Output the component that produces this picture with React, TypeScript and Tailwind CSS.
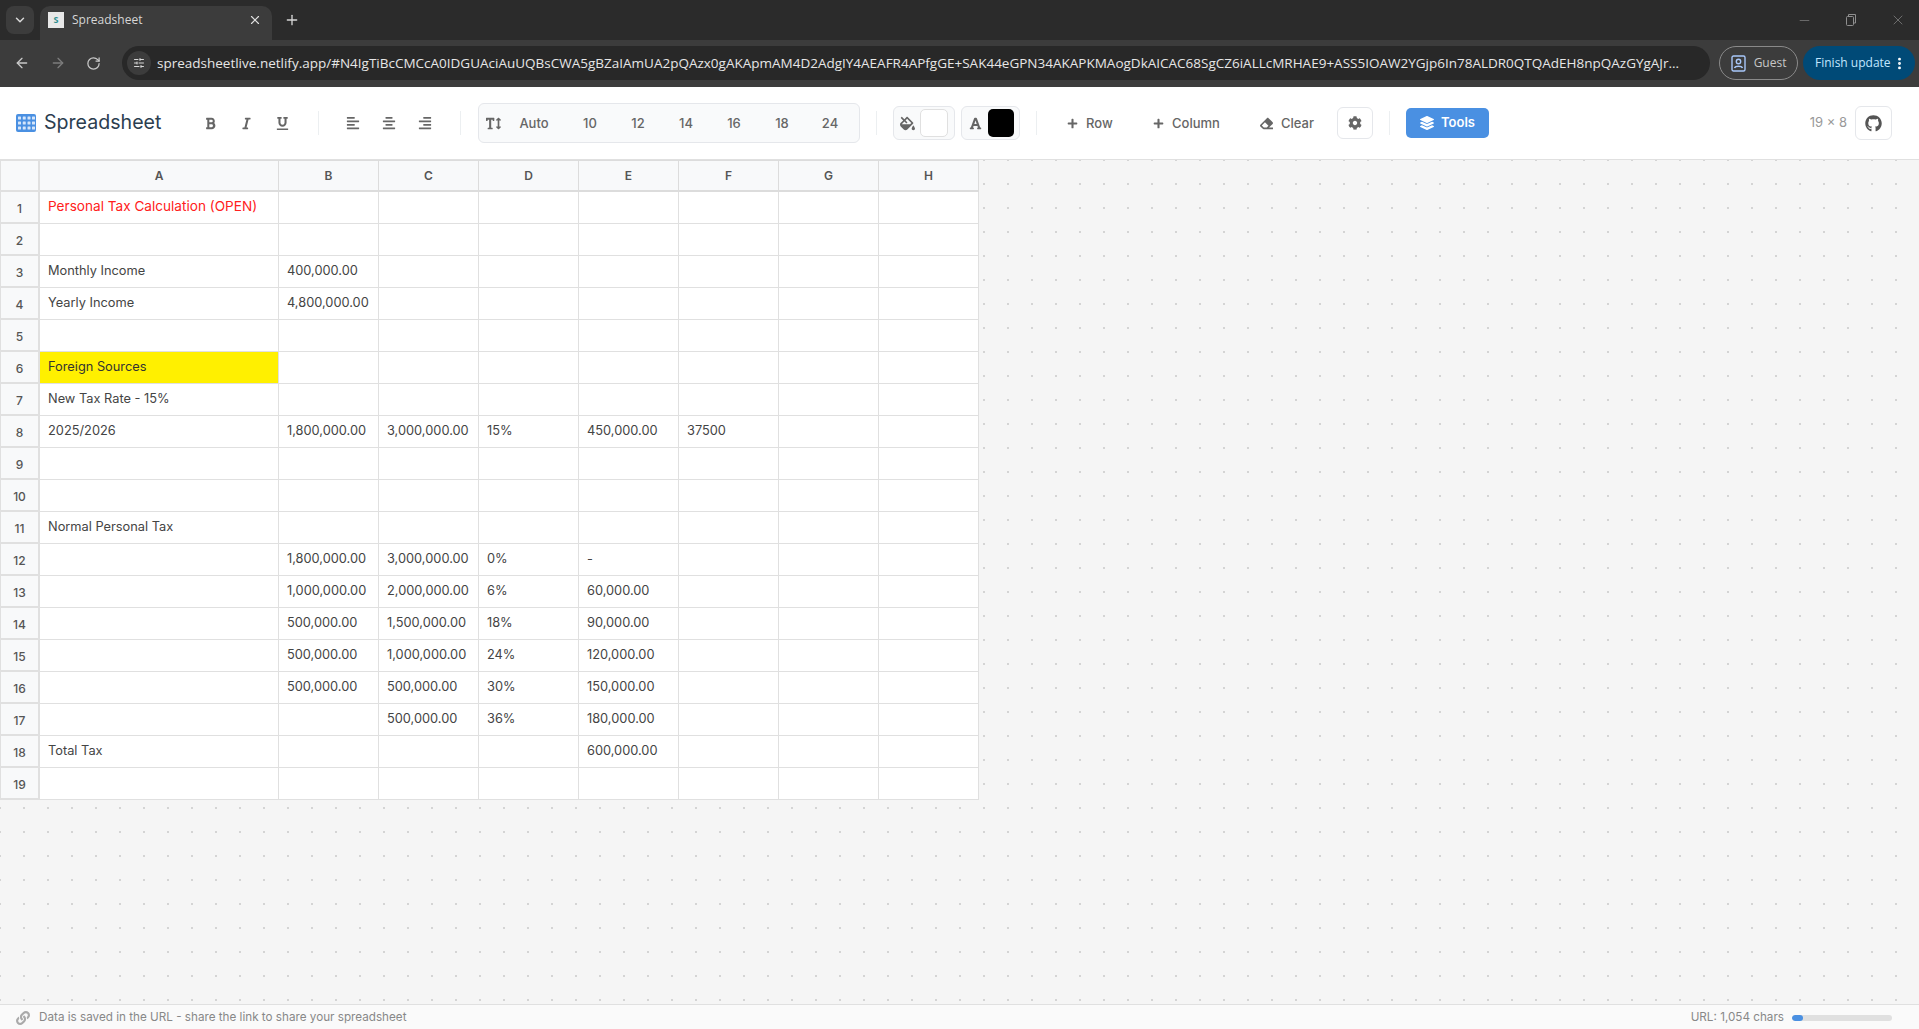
import type { ReactNode } from 'react';
import { ArrowLeft, ArrowRight, ChevronDown, Minus, Plus, RotateCw, SlidersHorizontal, X, MoreVertical } from 'lucide-react';
import {
  FaAlignCenter,
  FaAlignLeft,
  FaAlignRight,
  FaBold,
  FaCog,
  FaEraser,
  FaFillDrip,
  FaFont,
  FaGithub,
  FaItalic,
  FaLayerGroup,
  FaLink,
  FaPlus,
  FaTextHeight,
  FaUnderline,
} from 'react-icons/fa';

const columns = ['A', 'B', 'C', 'D', 'E', 'F', 'G', 'H'];
const sizes = ['10', '12', '14', '16', '18', '24'];

const url =
  'spreadsheetlive.netlify.app/#N4IgTiBcCMCcA0IDGUAciAuUQBsCWA5gBZaIAmUA2pQAzx0gAKApmAM4D2AdgIY4AEAFR4APfgGE+SAK44eGPN34AKAPKMAogDkAICAC68SgCZ6iALLcMRHAE9+ASS5IOAW2YGjp6In78ALDR0QTQAdEH8npQAzGYgAJr...';

// one entry per row, cells left to right
const rows: string[][] = [
  ['Personal Tax Calculation (OPEN)'],
  [],
  ['Monthly Income', '400,000.00'],
  ['Yearly Income', '4,800,000.00'],
  [],
  ['Foreign Sources'],
  ['New Tax Rate - 15%'],
  ['2025/2026', '1,800,000.00', '3,000,000.00', '15%', '450,000.00', '37500'],
  [],
  [],
  ['Normal Personal Tax'],
  ['', '1,800,000.00', '3,000,000.00', '0%', '-'],
  ['', '1,000,000.00', '2,000,000.00', '6%', '60,000.00'],
  ['', '500,000.00', '1,500,000.00', '18%', '90,000.00'],
  ['', '500,000.00', '1,000,000.00', '24%', '120,000.00'],
  ['', '500,000.00', '500,000.00', '30%', '150,000.00'],
  ['', '', '500,000.00', '36%', '180,000.00'],
  ['Total Tax', '', '', '', '600,000.00'],
  [],
];

const BrowserChrome = () => (
  <div className="shrink-0 font-['Open_Sans',sans-serif]">
    {/* Tab strip */}
    <div className="h-10 bg-[#2b2b2b] flex items-end pl-[6px]">
      <div className="w-7 h-7 mb-[6px] mr-[6px] rounded-lg bg-[#3c3c3c] flex items-center justify-center text-[#d8d8d8]">
        <ChevronDown size={14} strokeWidth={2.5} />
      </div>
      <div className="w-[232px] h-[34px] bg-[#3c3c3c] rounded-t-[10px] flex items-center pl-[8px] pr-[10px] pb-[6px]">
        <div className="w-4 h-4 bg-[#e8e8e8] text-[#2f8f8f] text-[9px] font-bold flex items-center justify-center">S</div>
        <span className="ml-[8px] text-[12px] text-[#d6d6d6] flex-1">Spreadsheet</span>
        <X size={14} className="text-[#e0e0e0]" />
      </div>
      <div className="ml-[12px] mb-[12px] text-[#d6d6d6]">
        <Plus size={16} strokeWidth={2} />
      </div>
      <div className="flex-1" />
      <div className="flex items-center gap-[33px] mb-[12px] pr-[13px] text-[#8f8f8f]">
        <Minus size={15} strokeWidth={1} />
        <svg width="12" height="14" viewBox="0 0 12 14" fill="none" stroke="currentColor" strokeWidth="1">
          <rect x="1.5" y="3.5" width="7" height="9" rx="1" />
          <path d="M3.5 3V1.5h7V10H9" />
        </svg>
        <X size={16} strokeWidth={1} />
      </div>
    </div>
    {/* Address row */}
    <div className="h-[47px] bg-[#3c3c3c] flex items-center pl-[14px] pr-[4px] pb-[1px]">
      <ArrowLeft size={16} className="text-[#c8c8c8]" />
      <ArrowRight size={16} className="ml-[20px] text-[#7c7c7c]" />
      <RotateCw size={15} className="ml-[20px] text-[#c8c8c8]" />
      <div className="ml-[21px] w-[1589px] h-[34px] rounded-full bg-[#282828] flex items-center pl-[5px] overflow-hidden">
        <div className="w-6 h-6 rounded-full bg-[#3c3c3c] flex items-center justify-center text-[#d8d8d8] shrink-0">
          <SlidersHorizontal size={12} />
        </div>
        <span className="ml-[6px] text-[13.5px] text-[#e6e6e6] whitespace-nowrap">{url}</span>
      </div>
      <div className="ml-[9px] w-[79px] h-[34px] rounded-full border border-[#8a8a8a] flex items-center justify-center gap-[8px] text-[#c7c7c7] text-[12px]">
        <svg width="15" height="17" viewBox="0 0 15 17" fill="none" stroke="#a8c7fa" strokeWidth="1.4">
          <rect x="1" y="1" width="13" height="15" rx="1.5" />
          <circle cx="7.5" cy="6.5" r="2.2" />
          <path d="M3.5 13c1-2.4 7-2.4 8 0" />
        </svg>
        Guest
      </div>
      <div className="ml-[5px] w-[112px] h-[34px] rounded-full bg-[#004a77] flex items-center pl-[12px] text-[#c2e7ff] text-[12px] whitespace-nowrap">
        Finish update
        <MoreVertical size={15} strokeWidth={2.6} className="ml-[1px] text-white" />
      </div>
    </div>
  </div>
);

const LogoIcon = () => (
  <svg width="20" height="18" viewBox="0 0 20 18" className="shrink-0">
    <rect width="20" height="18" rx="2" fill="#4a90e2" />
    {[2, 6.75, 11.5, 16].map((x) =>
      [2.5, 7.5, 12.5].map((y) => <rect key={x + '-' + y} x={x} y={y} width="3" height="3" rx="0.5" fill="#d6e6fa" />),
    )}
  </svg>
);

const IconButton = ({ children }: { children: ReactNode }) => (
  <button className="w-9 h-8 flex items-center justify-center text-[#666] rounded">{children}</button>
);

const Divider = ({ className }: { className: string }) => <div className={'w-px h-6 bg-[#eceff1] shrink-0 ' + className} />;

const ActionButton = ({ icon, label, className }: { icon: ReactNode; label: string; className: string }) => (
  <button className={'h-8 flex items-center gap-[8px] pt-[1px] text-[13px] font-medium text-[#666] ' + className}>
    {icon}
    {label}
  </button>
);

const Toolbar = () => (
  <div className="h-[73px] shrink-0 bg-white border-b border-[#e0e0e0] flex items-center pl-4 pr-[27px]">
    {/* Logo */}
    <div className="w-[147px] flex items-center gap-[8px]">
      <LogoIcon />
      <span className="text-[19.6px] font-normal text-[#2c3e50] leading-none">Spreadsheet</span>
    </div>

    <div className="ml-[29px] flex">
      <IconButton><FaBold size={13} /></IconButton>
      <IconButton><FaItalic size={13} /></IconButton>
      <IconButton><FaUnderline size={13} /></IconButton>
    </div>
    <Divider className="ml-[18px] mr-[16px]" />
    <div className="flex">
      <IconButton><FaAlignLeft size={14} /></IconButton>
      <IconButton><FaAlignCenter size={14} /></IconButton>
      <IconButton><FaAlignRight size={14} /></IconButton>
    </div>
    <Divider className="mx-[17px]" />

    {/* Font sizes */}
    <div className="w-[382px] h-10 rounded-md border border-[#e5e7eb] bg-[#f9fafb] flex items-center pt-[1px] text-[13px] font-medium text-[#666]">
      <div className="w-[28px] flex justify-center"><FaTextHeight size={15} /></div>
      <div className="w-[54px] mr-[5px] text-center">Auto</div>
      {sizes.map((size) => (
        <div key={size} className="w-12 text-center">{size}</div>
      ))}
    </div>
    <Divider className="mx-[16px]" />

    {/* Colours */}
    <div className="w-[62px] h-[34px] rounded-md border border-[#e5e7eb] bg-[#f9fafb] flex items-center pl-[6px]">
      <FaFillDrip size={15} className="text-[#666]" />
      <div className="ml-[5px] w-7 h-7 rounded-[5px] border border-[#e0e0e0] bg-white" />
    </div>
    <div className="ml-[6px] w-[59px] h-[34px] rounded-md border border-[#e5e7eb] bg-[#f9fafb] flex items-center pl-[7px]">
      <FaFont size={13} className="text-[#666]" />
      <div className="ml-[6px] w-[26px] h-7 rounded-[5px] bg-black" />
    </div>
    <Divider className="mx-[16px]" />

    <ActionButton icon={<FaPlus size={11} />} label="Row" className="ml-[14px] w-[62px]" />
    <ActionButton icon={<FaPlus size={11} />} label="Column" className="ml-[24px] w-[88px]" />
    <ActionButton icon={<FaEraser size={13} />} label="Clear" className="ml-[19px] w-[70px]" />
    <button className="ml-[7px] w-9 h-8 rounded-md border border-[#e5e7eb] bg-white flex items-center justify-center text-[#666]">
      <FaCog size={14} />
    </button>
    <Divider className="mx-[16px]" />
    <button className="w-[83px] h-[30px] rounded-[5px] bg-[#4a90e2] text-white text-[13px] font-semibold flex items-center justify-center gap-[7px]">
      <FaLayerGroup size={14} />
      Tools
    </button>

    <div className="flex-1" />
    <span className="text-[13px] text-[#999]">19 × 8</span>
    <button className="ml-[8px] w-[37px] h-[34px] rounded-md border border-[#e5e7eb] bg-white flex items-center justify-center text-[#555]">
      <FaGithub size={17} />
    </button>
  </div>
);

const Sheet = () => (
  <div className="flex-1 min-h-0 bg-[#f5f5f5] bg-[radial-gradient(#d4d4d4_1px,transparent_1px)] bg-[size:24px_24px] bg-[position:-12px_-12px]">
    <div className="w-[979px] grid grid-cols-[40px_239px_repeat(7,100px)] auto-rows-[32px] bg-white text-[12.8px] text-[#444]">
      <div className="bg-[#f8f9fa] border-t border-l border-r-2 border-b-2 border-[#e0e0e0]" />
      {columns.map((col) => (
        <div key={col} className="bg-[#f8f9fa] border-t border-r border-b-2 border-[#dcdcdc] flex items-center justify-center text-[12px] font-semibold text-[#555]">
          {col}
        </div>
      ))}
      {rows.map((row, r) => (
        <div key={r} className="contents">
          <div className="bg-[#f8f9fa] border-l border-r-2 border-b-2 border-[#e0e0e0] flex items-center justify-center pt-[3px] text-[12px] font-medium text-[#555]">
            {r + 1}
          </div>
          {columns.map((col, c) => {
            const first = r === 0 && c === 0;
            const yellow = r === 5 && c === 0;
            return (
              <div
                key={col}
                className={
                  'border-r border-b border-[#e0e0e0] flex items-center px-2 pb-[2px] whitespace-nowrap ' +
                  (first ? 'text-[13.6px] text-[#ff2020] ' : '') +
                  (yellow ? 'bg-[#fff000] text-[#333] ' : '')
                }
              >
                {row[c] ?? ''}
              </div>
            );
          })}
        </div>
      ))}
    </div>
  </div>
);

const StatusBar = () => (
  <div className="h-[25px] shrink-0 bg-[#fafafa] border-t border-[#e0e0e0] flex items-center pl-4 pr-[27px] pt-[2px] text-[11.7px] text-[#888]">
    <FaLink size={14} className="text-[#aaa]" />
    <span className="ml-[9px]">Data is saved in the URL - share the link to share your spreadsheet</span>
    <div className="flex-1" />
    <span>URL: 1,054 chars</span>
    <div className="ml-2 w-[100px] h-[6px] rounded-full bg-[#e0e0e0] overflow-hidden">
      <div className="h-full rounded-full bg-[#4a90e2]" style={{ width: '11%' }} />
    </div>
  </div>
);

const App = () => (
  <div className="w-[1919px] h-[1029px] overflow-hidden flex flex-col font-['Inter',sans-serif]">
    <BrowserChrome />
    <Toolbar />
    <Sheet />
    <StatusBar />
  </div>
);

export default App;
